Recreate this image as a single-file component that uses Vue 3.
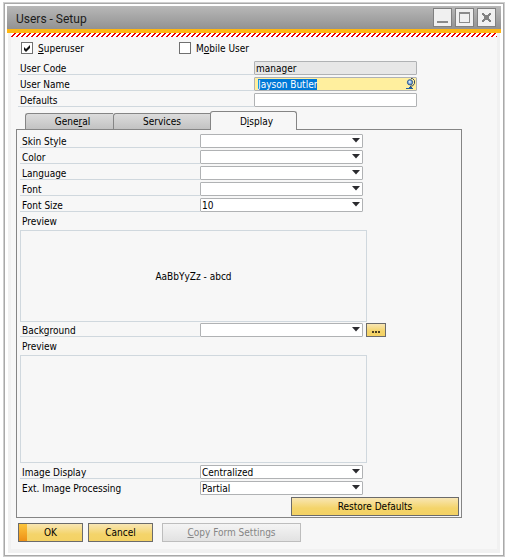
<script setup>
import { ref, onMounted } from 'vue'

const superuser = ref(true)
const mobileUser = ref(false)
const userCode = ref('manager')
const userName = ref('Jayson Butler')
const defaults = ref('')
const nameInput = ref(null)

const appearance = ref([
  { id: 'skin', label: 'Skin Style', value: '' },
  { id: 'color', label: 'Color', value: '' },
  { id: 'language', label: 'Language', value: '' },
  { id: 'font', label: 'Font', value: '' },
  { id: 'font-size', label: 'Font Size', value: '10' }
])
const background = ref('')
const imaging = ref([
  { id: 'image-display', label: 'Image Display', value: 'Centralized' },
  { id: 'ext-processing', label: 'Ext. Image Processing', value: 'Partial' }
])

onMounted(() => {
  nameInput.value.focus()
  nameInput.value.select()
})
</script>

<template>
  <main class="window">
    <header class="titlebar">
      <h1>Users - Setup</h1>
      <div class="controls">
        <button type="button" aria-label="Minimize">
          <svg viewBox="0 0 17 17"><rect x="3" y="12" width="11" height="2" fill="#8a8a8a" /></svg>
        </button>
        <button type="button" aria-label="Maximize">
          <svg viewBox="0 0 17 17"><path d="M3 3h11v11H3zM4 5v8h9V5z" fill="#8a8a8a" fill-rule="evenodd" /></svg>
        </button>
        <button type="button" aria-label="Close">
          <svg viewBox="0 0 17 17">
            <path d="M4 4h2v1h1v1h3V5h1V4h2v2h-1v1h-1v3h1v1h1v2h-2v-1h-1v-1H7v1H6v1H4v-2h1v-1h1V7H5V6H4z" fill="#808080" />
          </svg>
        </button>
      </div>
    </header>
    <form class="body" @submit.prevent>
      <svg class="hatch" aria-hidden="true">
        <defs>
          <pattern id="hatch" width="5" height="4" patternUnits="userSpaceOnUse">
            <rect width="5" height="4" fill="#fff" />
            <path d="M3 0h2v1H3zM2 1h2v1H2zM1 2h2v1H1zM0 3h2v1H0z" fill="#f00000" />
          </pattern>
        </defs>
        <rect width="100%" height="4" fill="url(#hatch)" />
      </svg>

      <div class="checks">
        <label class="check">
          <input v-model="superuser" type="checkbox" />
          <svg class="tick" viewBox="0 0 12 12"><path d="M3 5v3l2 2 4-4V3L5 7z" fill="#111" /></svg>
          <span><u>S</u>uperuser</span>
        </label>
        <label class="check">
          <input v-model="mobileUser" type="checkbox" />
          <svg class="tick" viewBox="0 0 12 12"><path d="M3 5v3l2 2 4-4V3L5 7z" fill="#111" /></svg>
          <span>M<u>o</u>bile User</span>
        </label>
      </div>

      <div class="rows user">
        <div class="row">
          <label for="user-code">User Code</label>
          <input id="user-code" v-model="userCode" class="field readonly" type="text" readonly />
        </div>
        <div class="row">
          <label for="user-name">User Name</label>
          <div class="control">
            <input id="user-name" ref="nameInput" v-model="userName" class="field active" type="text" />
            <svg class="globe" viewBox="0 0 9 11" aria-hidden="true">
              <path d="M5 0.500h1.500L8.500 2.500v3L6.500 8H4.500v1.500" fill="none" stroke="#3c4a5c" />
              <circle cx="4" cy="4.300" r="2.600" fill="#7fa8d8" stroke="#2f5a92" />
              <path d="M2.500 3.500l1.500-1 .8 1.200-.8 1.800z" fill="#e4eef8" />
              <path d="M3 9h3v1h1v1H0v-1h3z" fill="#1f5c9e" />
            </svg>
          </div>
        </div>
        <div class="row">
          <label for="defaults">Defaults</label>
          <input id="defaults" v-model="defaults" class="field" type="text" />
        </div>
      </div>

      <div class="tabs" role="tablist">
        <button type="button" role="tab" class="tab general">Gene<u>r</u>al</button>
        <button type="button" role="tab" class="tab services">Services</button>
        <button type="button" role="tab" class="tab selected" aria-selected="true">D<u>i</u>splay</button>
      </div>

      <section class="panel" role="tabpanel">
        <div class="rows">
          <div v-for="item in appearance" :key="item.id" class="row">
            <label :for="item.id">{{ item.label }}</label>
            <div class="control">
              <select :id="item.id" v-model="item.value" class="field">
                <option :value="item.value">{{ item.value }}</option>
              </select>
              <svg class="arrow" viewBox="0 0 8 5"><path d="M0 0h8L4 4.500z" fill="#2b2b2f" /></svg>
            </div>
          </div>
        </div>
        <p class="caption">Preview</p>
        <div class="preview sample">AaBbYyZz - abcd</div>
        <div class="row">
          <label for="background">Background</label>
          <div class="control">
            <select id="background" v-model="background" class="field">
              <option value=""></option>
            </select>
            <svg class="arrow" viewBox="0 0 8 5"><path d="M0 0h8L4 4.500z" fill="#2b2b2f" /></svg>
          </div>
          <button type="button" class="btn browse" aria-label="Browse">
            <svg viewBox="0 0 8 2"><path d="M0 0h2v2H0zM3 0h2v2H3zM6 0h2v2H6z" fill="#4a3f22" /></svg>
          </button>
        </div>
        <p class="caption">Preview</p>
        <div class="preview image"></div>
        <div class="rows imaging">
          <div v-for="item in imaging" :key="item.id" class="row">
            <label :for="item.id">{{ item.label }}</label>
            <div class="control">
              <select :id="item.id" v-model="item.value" class="field">
                <option :value="item.value">{{ item.value }}</option>
              </select>
              <svg class="arrow" viewBox="0 0 8 5"><path d="M0 0h8L4 4.500z" fill="#2b2b2f" /></svg>
            </div>
          </div>
        </div>
        <button type="button" class="btn restore">Restore Defaults</button>
      </section>

      <footer class="actions">
        <button type="submit" class="btn ok">OK</button>
        <button type="button" class="btn">Cancel</button>
        <button type="button" class="btn copy" disabled><u>C</u>opy Form Settings</button>
      </footer>
    </form>
  </main>
</template>

<style>
body {
  margin: 0;
  background: #fff;
}
</style>

<style scoped>
* {
  box-sizing: border-box;
}
.window {
  margin: 2px 0 0 3px;
  padding: 3px;
  border: 1px solid #cfcfcf;
  box-shadow: inset 0 0 0 1px #a9a9a9;
  background: #fff;
  color: #000;
  font: 10px/14px "DejaVu Sans Condensed", "Open Sans", sans-serif;
}
button,
input,
select {
  margin: 0;
  font: inherit;
  color: inherit;
}
u {
  text-underline-offset: 1px;
}
.titlebar {
  display: flex;
  align-items: center;
  justify-content: space-between;
  height: 27px;
  padding: 0 5px 0 9px;
  border-bottom: 4px solid #ffb612;
  background: linear-gradient(#b8b8b8, #929292);
}
h1 {
  margin: 0;
  padding-top: 2px;
  font: 12px/20px Roboto, sans-serif;
  color: #1c1c1c;
}
.controls {
  display: flex;
  gap: 3px;
}
.controls button {
  width: 19px;
  height: 19px;
  padding: 0;
  border: 1px solid #808080;
  background: #f0f0f0;
}
.controls svg {
  display: block;
}
.body {
  margin: 0 1px;
  padding: 0 0 7px;
  border: solid #f1f1f1;
  border-width: 0 3px 4px;
  background: #f7f7f7;
}
.hatch {
  display: block;
  width: 100%;
  height: 4px;
}
.checks {
  display: grid;
  grid-template-columns: 158px 1fr;
  padding: 4px 10px;
}
.check {
  position: relative;
  display: flex;
  align-items: center;
  gap: 5px;
}
.check span {
  padding-top: 2px;
  line-height: 12px;
}
.check input {
  appearance: none;
  width: 12px;
  height: 12px;
  border: 1px solid #707070;
  background: #fff;
}
.tick {
  position: absolute;
  left: 0;
  width: 12px;
  visibility: hidden;
}
.check input:checked + .tick {
  visibility: visible;
}
.rows {
  display: grid;
  gap: 2px;
}
.user {
  padding: 2px 7px 4px;
}
.row {
  display: grid;
  grid-template-columns: 180px 163px auto;
  justify-content: start;
  height: 14px;
}
.user .row {
  grid-template-columns: 236px 163px;
}
.row label {
  padding: 3px 0 0 2px;
  border-bottom: 1px solid #d0d8de;
  line-height: 10px;
  white-space: nowrap;
}
.imaging .row:last-child label {
  border-bottom-color: transparent;
}
.control {
  position: relative;
  display: grid;
}
.field {
  appearance: none;
  width: 100%;
  height: 14px;
  padding: 1px 1px 0;
  border: 1px solid #b0b2b4;
  border-radius: 1px;
  background: #fff;
  line-height: 12px;
  outline: none;
}
.readonly {
  background: #e7e7e7;
}
.active {
  padding: 0 3px;
  background: #ffef9e;
  caret-color: transparent;
}
.active::selection {
  background: #0078d7;
  color: #fff;
}
.globe {
  position: absolute;
  top: 1px;
  right: 2px;
  width: 9px;
  height: 11px;
}
.arrow {
  position: absolute;
  top: 4px;
  right: 3px;
  width: 8px;
  height: 5px;
  pointer-events: none;
}
.tabs {
  display: flex;
  align-items: flex-end;
  height: 18px;
  padding-left: 14px;
}
.tab {
  height: 16px;
  padding: 1px 0 0;
  border: 1px solid #858585;
  border-right-width: 0;
  border-bottom: 0;
  border-radius: 3px 0 0 0;
  background: linear-gradient(#dcdcdc, #c2c2c2);
}
.general {
  width: 88px;
  padding-left: 6px;
}
.services {
  width: 97px;
}
.selected {
  position: relative;
  width: 87px;
  height: 19px;
  margin-bottom: -1px;
  padding-left: 6px;
  border-right-width: 1px;
  border-radius: 3px 3px 0 0;
  background: #f7f7f7;
}
.panel {
  display: grid;
  margin: 0 35px 5px 5px;
  padding: 4px 2px 1px 3px;
  border: 1px solid #858585;
}
.caption {
  margin: 2px 0 0;
  padding-left: 2px;
  line-height: 16px;
}
.preview {
  display: grid;
  place-items: center;
  width: 347px;
  border: 1px solid #d0d8de;
}
.sample {
  height: 92px;
  margin-bottom: 1px;
  padding-top: 2px;
}
.image {
  height: 108px;
  margin-bottom: 2px;
}
.btn {
  width: 65px;
  height: 19px;
  padding: 0;
  border: 1px solid #6b6b6b;
  background: linear-gradient(#f8e6b4, #f4d46a 60%, #f4d264);
}
.browse {
  display: grid;
  place-items: end center;
  width: 20px;
  height: 14px;
  margin-left: 3px;
  padding-bottom: 3px;
}
.browse svg {
  width: 8px;
  height: 2px;
}
.restore {
  justify-self: end;
  width: 168px;
  margin-top: 2px;
}
.actions {
  display: flex;
  gap: 5px;
  padding-left: 7px;
}
.ok {
  background:
    linear-gradient(#fcc53c, #ee9016) left / 8px 100% no-repeat,
    linear-gradient(#f8e6b4, #f4d46a 60%, #f4d264);
}
.copy {
  width: 139px;
  margin-left: 4px;
  border-color: #bdbdbd;
  background: linear-gradient(#f4f4f4, #e2e2e2);
  color: #858585;
}
</style>
